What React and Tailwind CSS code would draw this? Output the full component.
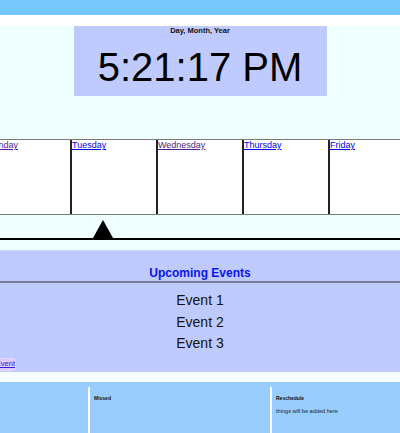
import React from 'react';

const days = [
  { name: 'Monday', visited: true },
  { name: 'Tuesday', visited: false },
  { name: 'Wednesday', visited: true },
  { name: 'Thursday', visited: false },
  { name: 'Friday', visited: false },
];

const events = ['Event 1', 'Event 2', 'Event 3'];

export default function App() {
  return (
    <div className="w-[400px] h-[433px] overflow-hidden bg-[#f0ffff] font-['Liberation_Sans',Arial,sans-serif]">
      {/* Top bar */}
      <div className="h-[15px] bg-[#74c8fc]" />
      <div className="h-[11px] bg-white" />

      {/* Clock */}
      <div className="h-[113px]">
        <div className="mx-auto w-[253px] h-[70px] bg-[#bfcbff] flex flex-col items-center">
          <p className="text-[7.5px] font-bold leading-none mt-[1px] text-[#111]">Day, Month, Year</p>
          <p className="text-[40px] leading-none mt-[12px] text-black">5:21:17 PM</p>
        </div>
      </div>

      {/* Week row */}
      <div className="w-[428px] ml-[-14px] h-[76px] flex border-t border-b border-[#7a7a7a] bg-white">
        {days.map((d, i) => (
          <div
            key={d.name}
            className={`flex-1 ${i > 0 ? 'border-l-2 border-[#222]' : ''}`}
          >
            <a
              href="#"
              className={`text-[9px] leading-none underline block pt-[1px] ${d.visited ? 'text-[#551a8b]' : 'text-[#0000ee]'}`}
            >
              {d.name}
            </a>
          </div>
        ))}
      </div>

      {/* Pointer */}
      <div className="h-[35px] flex flex-col">
        <div className="h-[5px]" />
        <div className="ml-[93px] w-0 h-0 border-l-[10px] border-r-[10px] border-b-[18px] border-l-transparent border-r-transparent border-b-black" />
        <div className="h-[2px] bg-black" />
      </div>

      {/* Upcoming events */}
      <div className="h-[122px] bg-[#bfcbff] border-t border-[#cdd8ff] flex flex-col">
        <div className="border-b-2 border-[#767c94] pt-[16px] pb-[2px]">
          <h2 className="text-[12px] font-bold text-[#0a14f0] text-center leading-none">Upcoming Events</h2>
        </div>
        <div className="flex flex-col items-center mt-[7px]">
          {events.map((e) => (
            <p key={e} className="text-[14px] leading-[21.5px] text-[#111]">{e}</p>
          ))}
        </div>
        <div className="mt-[3px] ml-[-10px] w-[26px] rounded-[4px] bg-[#dcc8ff] border border-[#e6d8ff] h-[13px] flex items-center justify-end">
          <a href="#" className="text-[7.5px] leading-none underline text-[#3322cc] whitespace-nowrap">Add Event</a>
        </div>
      </div>

      <div className="h-[10px] bg-[#f6ffff]" />

      {/* Bottom panel */}
      <div className="h-[51px] bg-[#99ccff] flex pt-[5px]">
        <div className="w-[88px]" />
        <div className="w-[182px] border-l-2 border-white pl-[4px]">
          <p className="text-[5px] font-bold leading-none mt-[9px] text-[#111]">Missed</p>
        </div>
        <div className="flex-1 border-l-2 border-white pl-[4px]">
          <p className="text-[5px] font-bold leading-none mt-[9px] text-[#111]">Reschedule</p>
          <p className="text-[5.6px] leading-none mt-[8px] text-[#222]">things will be added here</p>
        </div>
      </div>
    </div>
  );
}
